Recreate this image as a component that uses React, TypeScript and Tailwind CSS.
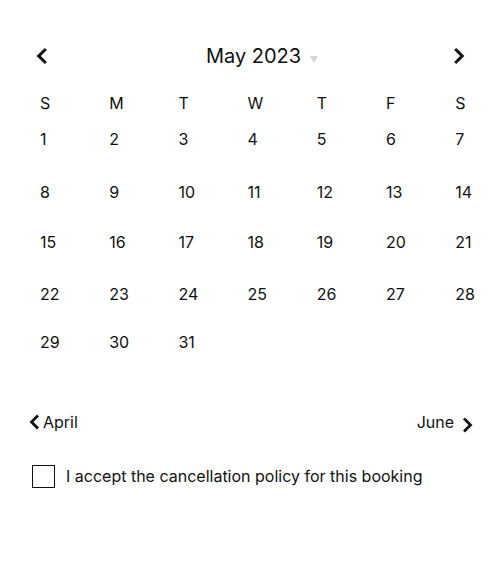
import React from 'react';

const weeks = [
  ['1', '2', '3', '4', '5', '6', '7'],
  ['8', '9', '10', '11', '12', '13', '14'],
  ['15', '16', '17', '18', '19', '20', '21'],
  ['22', '23', '24', '25', '26', '27', '28'],
  ['29', '30', '31', '', '', '', ''],
];

const rowGaps = ['mt-3', 'mt-[29px]', 'mt-[26px]', 'mt-[28px]', 'mt-6'];

function Chevron({ dir, className }: { dir: 'left' | 'right'; className?: string }) {
  return (
    <svg viewBox="0 0 12 16" className={className} fill="none" stroke="currentColor" strokeWidth={2.8} strokeLinecap="square" strokeLinejoin="miter">
      {dir === 'left' ? <polyline points="9,2.5 3.5,8 9,13.5" /> : <polyline points="3,2.5 8.5,8 3,13.5" />}
    </svg>
  );
}

function Row({ cells, className }: { cells: string[]; className?: string }) {
  return (
    <div className={`grid h-6 grid-cols-[repeat(6,69.2px)_1fr] items-center pl-10 leading-6 ${className ?? ''}`}>
      {cells.map((c, i) => (
        <span key={i}>{c}</span>
      ))}
    </div>
  );
}

export default function App() {
  return (
    <div className="min-h-[577px] w-[500px] overflow-hidden bg-white text-[16px] text-[#111] [font-family:Inter,'Liberation_Sans',sans-serif]">
      <div className="flex items-center justify-between pl-[35px] pr-[34px] pt-[47px]">
        <Chevron dir="left" className="h-[18px] w-[13px]" />
        <div className="relative ml-[6px] text-[20px] leading-[18px]">
          May 2023
          <span className="absolute left-[calc(100%+9px)] top-[9px] h-0 w-0 border-x-[4px] border-t-[7px] border-x-transparent border-t-[#d4d4d4]" />
        </div>
        <Chevron dir="right" className="h-[18px] w-[13px]" />
      </div>

      <Row cells={['S', 'M', 'T', 'W', 'T', 'F', 'S']} className="mt-[26px]" />
      {weeks.map((w, i) => (
        <Row key={i} cells={w} className={rowGaps[i]} />
      ))}

      <div className="mt-[56px] flex items-center justify-between pl-[28px] pr-[26px]">
        <div className="flex items-center gap-[3px]">
          <Chevron dir="left" className="h-[16px] w-[12px]" />
          <span className="leading-6">April</span>
        </div>
        <div className="flex items-center gap-[8px]">
          <span className="leading-6">June</span>
          <Chevron dir="right" className="mt-[6px] h-[16px] w-[12px]" />
        </div>
      </div>

      <label className="mt-[30px] flex items-center gap-[11px] pl-[32px]">
        <span className="h-[23px] w-[23px] border border-[#111] bg-white" />
        <span className="leading-6">I accept the cancellation policy for this booking</span>
      </label>
    </div>
  );
}
